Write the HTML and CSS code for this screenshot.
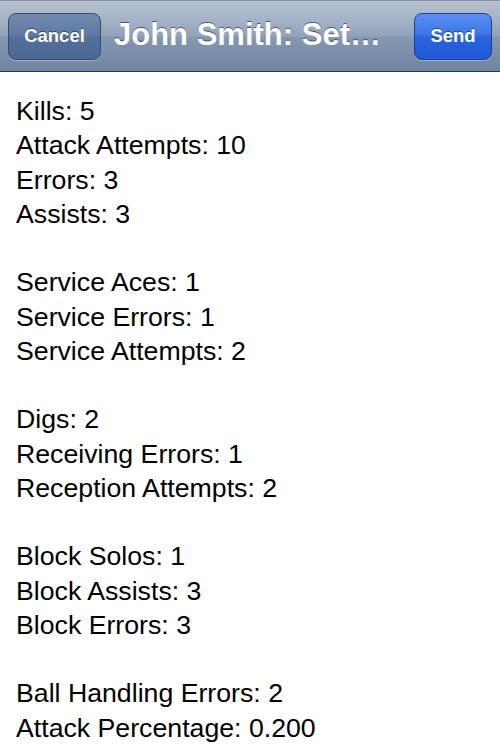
FILE: index.html
```html
<!DOCTYPE html>
<html>
<head>
<meta charset="utf-8">
<link rel="stylesheet" href="styles.css">
</head>
<body>
<div class="navbar">
  <div class="btn btn-cancel">Cancel</div>
  <div class="title">John Smith: Set…</div>
  <div class="btn btn-send">Send</div>
</div>
<div class="content">
  <div class="line">Kills: 5</div>
  <div class="line">Attack Attempts: 10</div>
  <div class="line">Errors: 3</div>
  <div class="line">Assists: 3</div>
  <div class="line blank"></div>
  <div class="line">Service Aces: 1</div>
  <div class="line">Service Errors: 1</div>
  <div class="line">Service Attempts: 2</div>
  <div class="line blank"></div>
  <div class="line">Digs: 2</div>
  <div class="line">Receiving Errors: 1</div>
  <div class="line">Reception Attempts: 2</div>
  <div class="line blank"></div>
  <div class="line">Block Solos: 1</div>
  <div class="line">Block Assists: 3</div>
  <div class="line">Block Errors: 3</div>
  <div class="line blank"></div>
  <div class="line">Ball Handling Errors: 2</div>
  <div class="line">Attack Percentage: 0.200</div>
  <div class="line">iPS Volleyball Scorer (iPhone)</div>
</div>
</body>
</html>
```
FILE: styles.css
```css
html, body {
  margin: 0;
  padding: 0;
  background: #ffffff;
  overflow: hidden;
  height: 750px;
}
body {
  font-family: "Liberation Sans", Arial, Helvetica, sans-serif;
}
.navbar {
  height: 72px;
  box-sizing: border-box;
  border-top: 1px solid #8794a6;
  border-bottom: 1px solid #2c3543;
  background: linear-gradient(to bottom, #b6c1d1 0%, #a3b1c5 30%, #90a2b9 50%, #8698b1 52%, #6e84a2 100%);
  display: flex;
  align-items: center;
  padding: 0 8px;
}
.btn {
  height: 47px;
  box-sizing: border-box;
  border-radius: 8px;
  display: flex;
  align-items: center;
  justify-content: center;
  color: #fff;
  font-weight: bold;
  font-size: 18.5px;
  text-shadow: 0 -1px 0 rgba(0,0,0,0.45);
}
.btn-cancel {
  width: 93px;
  border: 1px solid #3b4b64;
  background: linear-gradient(to bottom, #7189ad 0%, #5f7ba4 45%, #53709b 52%, #4b6894 100%);
  box-shadow: 0 1px 0 rgba(255,255,255,0.3);
}
.btn-send {
  width: 78px;
  border: 1px solid #1c3f92;
  background: linear-gradient(to bottom, #5d8ff0 0%, #3b76e7 45%, #2a63de 52%, #2058d6 100%);
  box-shadow: 0 1px 0 rgba(255,255,255,0.3);
  margin-left: auto;
}
.title {
  margin-left: 13px;
  font-weight: bold;
  font-size: 31px;
  color: #fff;
  text-shadow: 0 -1px 0 rgba(0,0,0,0.5);
  white-space: nowrap;
  margin-top: -2px;
}
.content {
  padding: 22px 16px 0;
  font-size: 26.7px;
  color: #000;
}
.line {
  height: 34.25px;
  line-height: 34.25px;
  white-space: nowrap;
}
```
